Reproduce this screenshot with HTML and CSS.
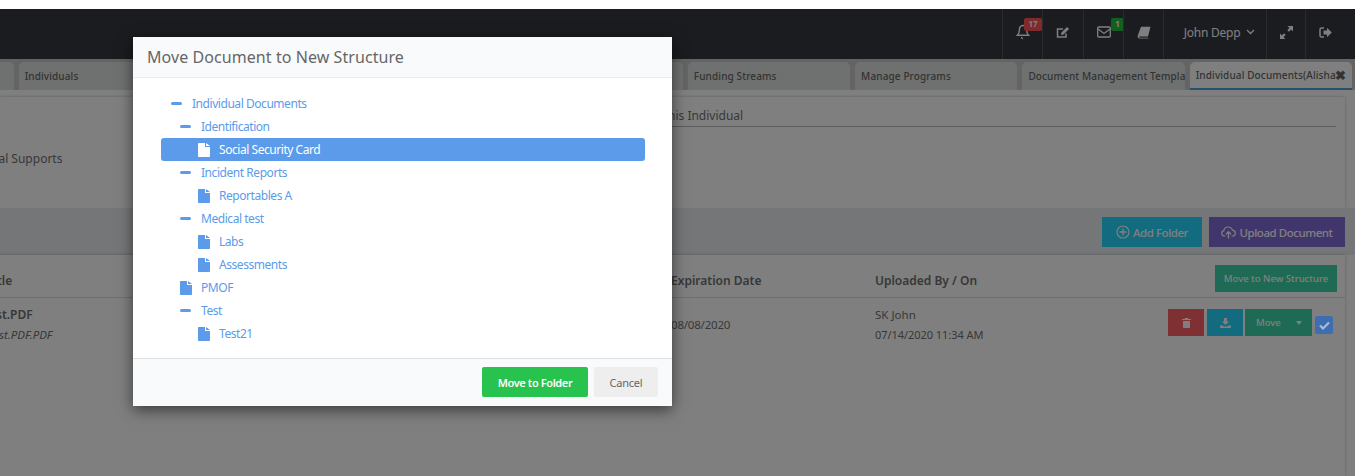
FILE: index.html
```html
<!DOCTYPE html>
<html lang="en">
<head>
<meta charset="utf-8">
<title>Move Document</title>
<link rel="stylesheet" href="styles.css">
</head>
<body>
<div class="page">
  <header class="topbar">
    <div class="cell c-bell">
      <svg class="ico" width="14" height="16" viewBox="0 0 14 16"><path d="M7 1.500c-2.600 0-3.600 2-3.600 4.200 0 3-.8 4.300-2 5.600h11.200c-1.200-1.300-2-2.600-2-5.600C10.600 3.500 9.600 1.500 7 1.500zM5.500 13c.2 1.200.8 1.800 1.500 1.800" fill="none" stroke="currentColor" stroke-width="1.400"/></svg>
      <span class="badge b-red">17</span>
    </div>
    <div class="cell c-edit">
      <svg class="ico" width="14" height="13" viewBox="0 0 14 13"><path d="M10 7.500V11H1.500V3H7" fill="none" stroke="currentColor" stroke-width="1.500"/><path d="M5.500 6.500 11 1l2 2-5.500 5.500-2.500.5z" fill="currentColor"/></svg>
    </div>
    <div class="cell c-mail">
      <svg class="ico" width="14" height="12" viewBox="0 0 14 12"><rect x=".7" y="1" width="12.600" height="10" rx="1" fill="none" stroke="currentColor" stroke-width="1.300"/><path d="M1 3l6 4.500L13 3" fill="none" stroke="currentColor" stroke-width="1.300"/></svg>
      <span class="badge b-green">1</span>
    </div>
    <div class="cell c-book">
      <svg class="ico" width="14" height="13" viewBox="0 0 14 13"><path d="M4 .8h9.500L11 10.500H2.800c-.9 0-1 1.300 0 1.300h8.700l-.3.800H2.500C.8 12.600.300 11 .8 9.500z" fill="currentColor"/></svg>
    </div>
    <div class="cell c-user"><span>John Depp</span>
      <svg width="9" height="6" viewBox="0 0 9 6"><path d="M1 1l3.500 3.500L8 1" fill="none" stroke="currentColor" stroke-width="1.300"/></svg>
    </div>
    <div class="cell c-exp">
      <svg class="ico" width="13" height="13" viewBox="0 0 12 12"><path d="M7 0h5v5l-1.800-1.800-2 2-1.400-1.400 2-2zM5 12H0V7l1.800 1.800 2-2 1.400 1.400-2 2z" fill="currentColor"/></svg>
    </div>
    <div class="cell c-out">
      <svg class="ico" width="13" height="11" viewBox="0 0 13 11"><path d="M5 1H2.500C1.500 1 1 1.600 1 2.500v6C1 9.400 1.500 10 2.500 10H5" fill="none" stroke="currentColor" stroke-width="1.500"/><path d="M8 .8l4.800 4.700L8 10.200V7.500H4.500v-4H8z" fill="currentColor"/></svg>
    </div>
  </header>

  <nav class="tabs">
    <div class="tab"></div>
    <div class="tab"><span>Individuals</span></div>
    <div class="tab"></div>
    <div class="tab"></div>
    <div class="tab"></div>
    <div class="tab"><span>Funding Streams</span></div>
    <div class="tab"><span>Manage Programs</span></div>
    <div class="tab"><span>Document Management Templa</span></div>
    <div class="tab tab-active"><span>Individual Documents(Alisha</span><b class="tab-x">✖</b></div>
  </nav>

  <section class="panel info">
    <div class="info-left"><span class="info-cut">ual Supports</span></div>
    <div class="info-right"><div class="info-title"><span class="info-title-text">his Individual</span></div></div>
  </section>

  <div class="actions">
    <button class="btn btn-teal">
      <svg width="14" height="14" viewBox="0 0 14 14"><circle cx="7" cy="7" r="6" fill="none" stroke="currentColor" stroke-width="1.200"/><path d="M7 3.500v7M3.500 7h7" stroke="currentColor" stroke-width="1.300"/></svg>
      Add Folder
    </button>
    <button class="btn btn-purple">
      <svg width="15" height="13" viewBox="0 0 15 13"><path d="M4.500 10H3.500C1.800 10 .7 8.800.7 7.300c0-1.300.9-2.400 2.200-2.600C3.200 2.600 5 1 7.200 1c2 0 3.700 1.300 4.200 3.200 1.700.1 2.900 1.400 2.900 3 0 1.600-1.200 2.800-2.800 2.800h-1" fill="none" stroke="currentColor" stroke-width="1.200"/><path d="M7.500 12.500V6M5 8.200l2.500-2.500L10 8.200" fill="none" stroke="currentColor" stroke-width="1.300"/></svg>
      Upload Document
    </button>
  </div>

  <section class="panel docs">
    <div class="docs-row docs-head">
      <div class="cut-tle">tle</div>
      <div>Expiration Date</div>
      <div>Uploaded By / On</div>
      <div class="docs-right"><button class="btn-structure">Move to New Structure</button></div>
    </div>
    <div class="docs-row docs-body">
      <div class="doc-name"><strong>st.PDF</strong><em>st.PDF.PDF</em></div>
      <div class="doc-date">08/08/2020</div>
      <div class="doc-user"><span>SK John</span><span>07/14/2020 11:34 AM</span></div>
      <div class="doc-actions">
        <button class="act act-red"><svg width="9" height="10" viewBox="0 0 9 10"><path d="M3 0h3l.5 1H9v1H0V1h2.500zM1 3h7v6c0 .6-.4 1-1 1H2c-.6 0-1-.4-1-1z" fill="currentColor"/></svg></button>
        <button class="act act-blue"><svg width="11" height="10" viewBox="0 0 11 10"><path d="M4 0h3v3.500h2.200L5.500 7 1.800 3.500H4zM0 7.500h2.500L4 8.500h3l1.500-1H11V10H0z" fill="currentColor"/></svg></button>
        <div class="act-move"><span>Move</span><i class="caret"></i></div>
        <span class="check"><svg width="11" height="9" viewBox="0 0 11 9"><path d="M1 4.500l3 3L10 1.500" fill="none" stroke="currentColor" stroke-width="2.200"/></svg></span>
      </div>
    </div>
  </section>
</div>

<div class="overlay"></div>

<div class="modal">
  <div class="modal-head">Move Document to New Structure</div>
  <ul class="tree">
    <li class="node lv0"><i class="dash"></i>Individual Documents</li>
    <li class="node lv1"><i class="dash"></i>Identification</li>
    <li class="node lv2 selected"><svg class="file" width="12" height="14" viewBox="0 0 12 14"><path d="M0 1c0-.6.400-1 1-1h6v4h5v9c0 .6-.4 1-1 1H1c-.6 0-1-.4-1-1zM8 0l4 3H8z" fill="currentColor"/></svg>Social Security Card</li>
    <li class="node lv1"><i class="dash"></i>Incident Reports</li>
    <li class="node lv2"><svg class="file" width="12" height="14" viewBox="0 0 12 14"><path d="M0 1c0-.6.400-1 1-1h6v4h5v9c0 .6-.4 1-1 1H1c-.6 0-1-.4-1-1zM8 0l4 3H8z" fill="currentColor"/></svg>Reportables A</li>
    <li class="node lv1"><i class="dash"></i>Medical test</li>
    <li class="node lv2"><svg class="file" width="12" height="14" viewBox="0 0 12 14"><path d="M0 1c0-.6.400-1 1-1h6v4h5v9c0 .6-.4 1-1 1H1c-.6 0-1-.4-1-1zM8 0l4 3H8z" fill="currentColor"/></svg>Labs</li>
    <li class="node lv2"><svg class="file" width="12" height="14" viewBox="0 0 12 14"><path d="M0 1c0-.6.400-1 1-1h6v4h5v9c0 .6-.4 1-1 1H1c-.6 0-1-.4-1-1zM8 0l4 3H8z" fill="currentColor"/></svg>Assessments</li>
    <li class="node lv1"><svg class="file" width="12" height="14" viewBox="0 0 12 14"><path d="M0 1c0-.6.400-1 1-1h6v4h5v9c0 .6-.4 1-1 1H1c-.6 0-1-.4-1-1zM8 0l4 3H8z" fill="currentColor"/></svg>PMOF</li>
    <li class="node lv1"><i class="dash"></i>Test</li>
    <li class="node lv2"><svg class="file" width="12" height="14" viewBox="0 0 12 14"><path d="M0 1c0-.6.400-1 1-1h6v4h5v9c0 .6-.4 1-1 1H1c-.6 0-1-.4-1-1zM8 0l4 3H8z" fill="currentColor"/></svg>Test21</li>
  </ul>
  <div class="modal-foot">
    <button class="foot-btn foot-go">Move to Folder</button>
    <button class="foot-btn foot-cancel">Cancel</button>
  </div>
</div>
</body>
</html>
```

FILE: styles.css
```css
* { box-sizing: border-box; }
html, body { margin: 0; height: 476px; overflow: hidden; }
body { background: #fff; font-family: "Noto Sans", "Open Sans", sans-serif; font-size: 12px; color: #707070; }
button { font-family: inherit; border: 0; padding: 0; }
ul { list-style: none; margin: 0; padding: 0; }

.page { padding-top: 9px; height: 476px; background: #fff; overflow: hidden; }

.topbar { height: 50px; background: #36383f; display: flex; justify-content: flex-end; color: #fff; }
.cell { position: relative; display: flex; align-items: center; justify-content: center; border-left: 1px solid #55565b; padding-bottom: 4px; }
.cell .ico { display: block; }
.c-bell { width: 40px; }
.c-edit { width: 41px; }
.c-mail { width: 40px; }
.c-book { width: 40px; }
.c-user { width: 103px; gap: 6px; padding-left: 9px; font-size: 12px; letter-spacing: -.25px; }
.c-exp { width: 39px; }
.c-out { width: 50px; padding-right: 10px; }
.badge { position: absolute; top: 9px; color: #fff; font-size: 8px; line-height: 12px; height: 13px; text-align: center; border-radius: 2px; font-weight: 700; }
.b-red { left: 21px; width: 18px; background: #ff5558; }
.b-green { left: 27px; width: 13px; background: #22c044; }

.tabs { height: 31px; background: #c8c9c8; display: flex; justify-content: flex-end; gap: 5px; padding: 3px 3px 0 0; overflow: hidden; }
.tab { flex: 0 0 162.3px; height: 28px; background: #dfe3e1; border-radius: 5px 5px 0 0; padding: 0 6px; line-height: 28px; font-size: 10px; font-weight: 500; letter-spacing: .12px; color: #666; white-space: nowrap; overflow: hidden; position: relative; }
.tab-active { background: #fff; border-bottom: 2px solid #4aa3d8; line-height: 27px; }
.tab-x { position: absolute; right: 6px; top: 0; font-size: 13px; color: #666; letter-spacing: 0; }

.panel { background: #fff; width: 1345px; }
.info { height: 111px; margin-top: 7px; display: flex; box-shadow: 0 0 3px rgba(0,0,0,.25); }
.info-left { width: 660px; padding-top: 54px; font-size: 12px; line-height: 16px; overflow: hidden; }
.info-cut { display: block; margin-left: -9px; }
.info-right { flex: 1; padding-right: 9px; }
.info-title { margin-top: 11px; padding-bottom: 3px; border-bottom: 1px solid #bbb; font-size: 12px; line-height: 15px; }
.info-title-text { margin-left: 8px; }

.actions { height: 47px; background: #e9ecf0; display: flex; justify-content: flex-end; align-items: flex-start; gap: 7px; padding: 9px 10px 0 0; }
.btn { height: 30px; display: flex; align-items: center; justify-content: center; gap: 3px; color: #fff; font-size: 11.500px; font-weight: 500; letter-spacing: -.45px; }
.btn-teal { width: 100px; background: #26d6ff; }
.btn-purple { width: 136px; background: #826cd8; }

.docs { height: 221px; box-shadow: 0 0 3px rgba(0,0,0,.25); }
.docs-row { display: grid; grid-template-columns: 671px 204px 1fr auto; }
.docs-head { height: 43px; align-items: center; border-bottom: 1px solid #ddd; font-size: 12px; font-weight: 600; line-height: 16px; padding-top: 10px; }
.cut-tle { margin-left: -3px; }
.docs-right { padding-right: 8px; align-self: start; }
.btn-structure { display: block; width: 122px; height: 27px; background: #3cd4a8; color: #fff; font-size: 9.500px; font-weight: 500; }
.docs-body { padding-top: 8px; line-height: 18px; font-size: 11.500px; }
.doc-name strong, .doc-name em, .doc-user span { display: block; margin-left: -4px; }
.doc-name strong { font-weight: 600; font-size: 12px; margin-bottom: 2px; }
.doc-name em { font-size: 11.500px; margin-left: -1px; }
.doc-date { padding-top: 10px; letter-spacing: -.2px; }
.doc-user span { margin-left: 0; }
.doc-user span + span { margin-top: 2px; font-size: 11px; letter-spacing: -.05px; }
.doc-actions { display: flex; align-items: flex-start; gap: 3px; padding-right: 12px; margin-top: 3px; }
.act { width: 36px; height: 27px; color: #fff; display: flex; align-items: center; justify-content: center; }
.act-red { background: #ff6066; }
.act-blue { background: #26d6ff; margin-right: -1px; }
.act-move { width: 67px; height: 27px; background: #3cd4a8; color: #fff; font-size: 9.500px; font-weight: 500; display: flex; align-items: center; justify-content: space-between; padding: 0 10px 0 11px; }
.caret { width: 0; height: 0; border-left: 3.500px solid transparent; border-right: 3.500px solid transparent; border-top: 4px solid #fff; }
.check { position: relative; z-index: 1; width: 18px; height: 18px; margin-top: 7px; background: #3e6eb0; border-radius: 2px; color: #a6bcd8; display: flex; align-items: center; justify-content: center; }

.overlay { position: absolute; left: 0; right: 0; top: 9px; bottom: 0; background: rgba(0,0,0,.5); }

.modal { position: absolute; z-index: 2; left: 133px; top: 37px; width: 539px; height: 369px; background: #fff; box-shadow: 0 4px 14px rgba(0,0,0,.55); display: flex; flex-direction: column; }
.modal-head { height: 41px; background: #f9fafc; border-bottom: 1px solid #eceef1; padding: 0 14px; font-size: 16px; line-height: 40px; color: #666; letter-spacing: .07px; }
.tree { flex: 1; padding: 14px 27px 0 28px; }
.node { height: 23px; display: flex; align-items: center; font-size: 12px; color: #5b9bea; letter-spacing: -.45px; border-radius: 3px; }
.lv0 { padding-left: 10px; }
.lv1 { padding-left: 19px; }
.lv2 { padding-left: 37px; }
.dash { width: 11px; height: 3px; border-radius: 1.500px; background: #5b9bea; margin-right: 10px; }
.file { margin-right: 9px; flex: none; }
.selected { background: #5b9bea; color: #fff; }
.modal-foot { height: 48px; background: #f9fafc; border-top: 1px solid #dfe1e4; display: flex; justify-content: flex-end; align-items: flex-start; gap: 6px; padding: 8px 14px 0 0; }
.foot-btn { height: 30px; border-radius: 2px; font-size: 11px; }
.foot-go { width: 106px; background: #28c24f; color: #fff; font-weight: 600; letter-spacing: -.4px; }
.foot-cancel { width: 64px; background: #eee; color: #666; letter-spacing: -.2px; }
```
